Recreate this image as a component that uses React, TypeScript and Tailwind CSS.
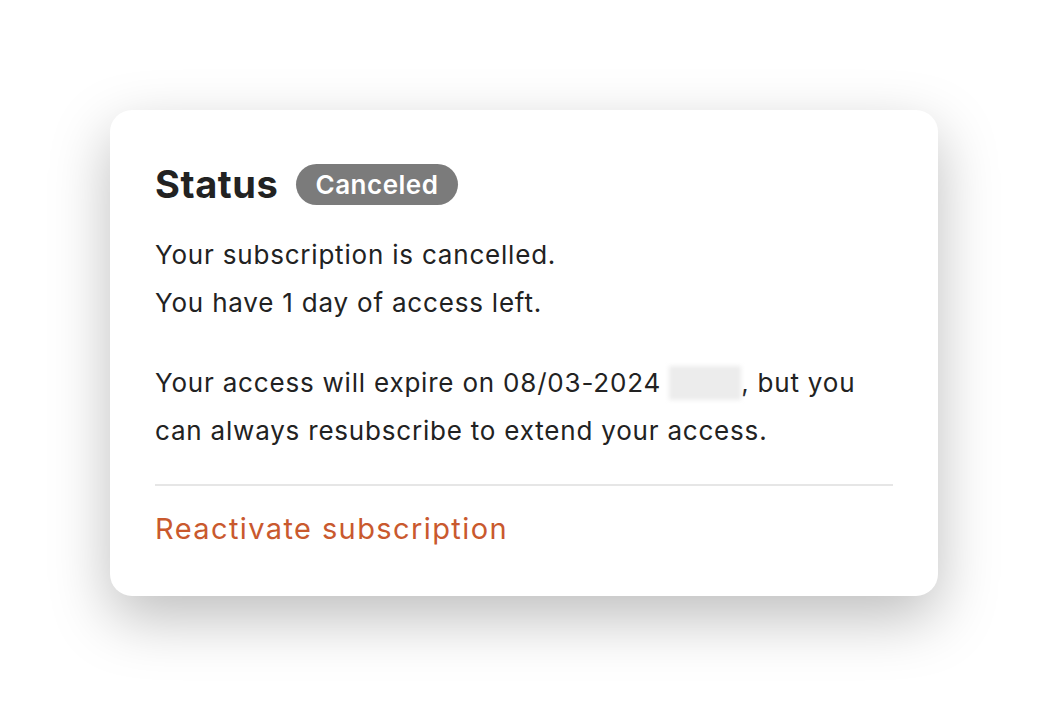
import React from 'react';

const App: React.FC = () => {
  return (
    <div
      className="w-[1048px] h-[706px] bg-white pt-[110px] pl-[110px]"
      style={{ fontFamily: 'Inter, "Noto Sans", sans-serif' }}
    >
      <div className="w-[828px] h-[486px] bg-white rounded-[22px] shadow-[0_22px_60px_rgba(0,0,0,0.26)] px-[45px] pt-[50px]">
        <div className="flex items-center gap-[17px]">
          <h1 className="text-[38px] font-bold text-[#222222] leading-[48px] tracking-[0.6px]">Status</h1>
          <span className="h-[41px] px-[20px] rounded-full bg-[#7b7b7b] text-white text-[26px] font-semibold tracking-[0.5px] flex items-center">
            Canceled
          </span>
        </div>
        <div className="mt-[23px] text-[26px] leading-[48px] tracking-[0.8px] text-[#222222]">
          <p>Your subscription is cancelled.</p>
          <p>You have 1 day of access left.</p>
        </div>
        <p className="mt-[32px] text-[26px] leading-[48px] tracking-[0.8px] text-[#222222]">
          Your access will expire on 08/03-2024{' '}
          <span className="inline-block align-middle w-[72px] h-[34px] bg-[#ececec] blur-[2px] -mt-[4px]" />
          , but you can always resubscribe to extend your access.
        </p>
        <div className="mt-[29px] h-[2px] bg-[#e6e6e6]" />
        <a className="block mt-[19px] text-[29px] leading-[48px] tracking-[1.4px] text-[#c9592e]">
          Reactivate subscription
        </a>
      </div>
    </div>
  );
};

export default App;
